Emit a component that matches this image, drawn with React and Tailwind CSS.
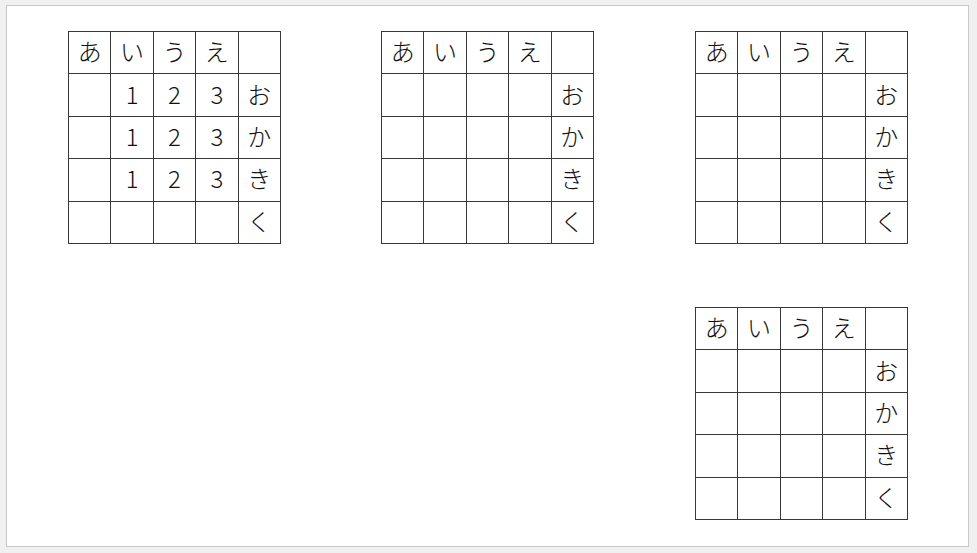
const header = ['あ', 'い', 'う', 'え', '']
const side = ['お', 'か', 'き', 'く']

function KanaTable({ nums }) {
  return (
    <table className="w-[213px] h-[213px] table-fixed border-collapse">
      <tbody>
        <tr>
          {header.map((h, i) => (
            <td key={i} className="border border-[#383838] text-center align-middle pb-[3px] p-0">{h}</td>
          ))}
        </tr>
        {side.map((s, r) => (
          <tr key={r}>
            <td className="border border-[#383838] p-0"></td>
            {[1, 2, 3].map(n => (
              <td key={n} className="border border-[#383838] text-center align-middle pb-[3px] p-0">
                {nums && r < 3 ? n : ''}
              </td>
            ))}
            <td className="border border-[#383838] text-center align-middle pb-[3px] p-0">{s}</td>
          </tr>
        ))}
      </tbody>
    </table>
  )
}

export default function App() {
  return (
    <div className="w-[977px] h-[553px] bg-[#f0f0f0] pt-[5px] pl-[6px]">
      <div
        className="w-[963px] h-[542px] bg-white border border-[#c8c8c8] pl-[61px] pt-[25px] text-[24px] leading-none text-[#111] font-light"
        style={{ fontFamily: '"Noto Sans CJK JP", "Noto Sans", sans-serif' }}
      >
        <div className="grid grid-cols-[213px_214px_213px] gap-x-[100px] gap-y-[63px]">
          <KanaTable nums />
          <KanaTable />
          <KanaTable />
          <div></div>
          <div></div>
          <KanaTable />
        </div>
      </div>
    </div>
  )
}
